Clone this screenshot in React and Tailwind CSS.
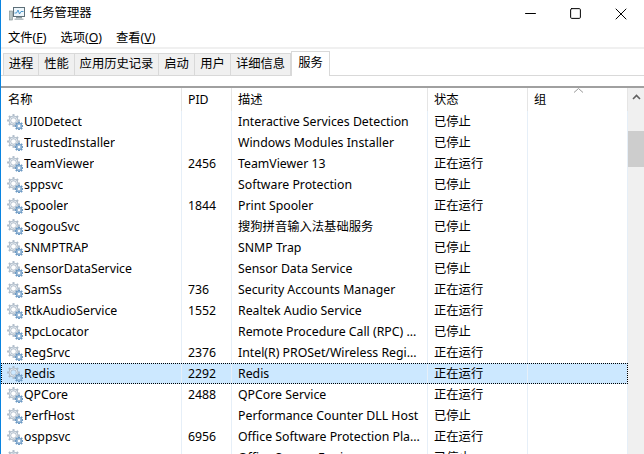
import { Minus, Square, X } from 'lucide-react'

const font = '[font-family:"Noto_Sans","Noto_Sans_CJK_SC",sans-serif]'

const tabs = [
  { label: '进程', w: 'w-[36px]' },
  { label: '性能', w: 'w-[36px]' },
  { label: '应用历史记录', w: 'w-[84px]' },
  { label: '启动', w: 'w-[36px]' },
  { label: '用户', w: 'w-[36px]' },
  { label: '详细信息', w: 'w-[60px]' },
]

const rows = [
  ['UI0Detect', '', 'Interactive Services Detection', '已停止'],
  ['TrustedInstaller', '', 'Windows Modules Installer', '已停止'],
  ['TeamViewer', '2456', 'TeamViewer 13', '正在运行'],
  ['sppsvc', '', 'Software Protection', '已停止'],
  ['Spooler', '1844', 'Print Spooler', '正在运行'],
  ['SogouSvc', '', '搜狗拼音输入法基础服务', '已停止'],
  ['SNMPTRAP', '', 'SNMP Trap', '已停止'],
  ['SensorDataService', '', 'Sensor Data Service', '已停止'],
  ['SamSs', '736', 'Security Accounts Manager', '正在运行'],
  ['RtkAudioService', '1552', 'Realtek Audio Service', '正在运行'],
  ['RpcLocator', '', 'Remote Procedure Call (RPC) ...', '已停止'],
  ['RegSrvc', '2376', 'Intel(R) PROSet/Wireless Regi...', '正在运行'],
  ['Redis', '2292', 'Redis', '正在运行'],
  ['QPCore', '2488', 'QPCore Service', '正在运行'],
  ['PerfHost', '', 'Performance Counter DLL Host', '已停止'],
  ['osppsvc', '6956', 'Office Software Protection Pla...', '正在运行'],
  ['ose', '', 'Office Source Engine', '已停止'],
]

function Cog({ cx, cy, r, fill, stroke }) {
  const teeth = [0, 45, 90, 135, 180, 225, 270, 315]
  return (
    <g>
      {teeth.map((a) => (
        <rect
          key={a}
          x={cx - 1}
          y={cy - r - 1.4}
          width="2"
          height="2.4"
          fill={stroke}
          transform={`rotate(${a} ${cx} ${cy})`}
        />
      ))}
      <circle cx={cx} cy={cy} r={r * 0.72} fill="none" stroke={stroke} strokeWidth={r * 0.5} />
      <circle cx={cx} cy={cy} r={r * 0.72} fill="none" stroke={fill} strokeWidth={r * 0.18} />
    </g>
  )
}

function GearIcon() {
  return (
    <svg width="16" height="16" viewBox="0 0 16 16" className="shrink-0">
      <Cog cx={6.5} cy={6.5} r={5} fill="#e8edf2" stroke="#aebbc9" />
      <Cog cx={12} cy={12} r={3} fill="#cfe0f0" stroke="#6d9ac4" />
    </svg>
  )
}

function AppIcon() {
  return (
    <svg width="16" height="16" viewBox="0 0 16 16" className="shrink-0">
      <rect x="0.5" y="5" width="3" height="9" fill="#b9c4c4" stroke="#7d8c8c" strokeWidth="0.6" />
      <rect x="4.5" y="1.5" width="11" height="9" fill="#eef6fb" stroke="#5d6f78" />
      <path d="M5.5 7 L7.5 7 L9 4 L10.5 8 L12 5.5 L14.5 5.5" fill="none" stroke="#3a8fc8" strokeWidth="0.9" />
      <rect x="7" y="11" width="6" height="1.5" fill="#8b9a9f" />
      <rect x="5.5" y="12.5" width="9" height="1.5" fill="#b4bec2" />
    </svg>
  )
}

function Row({ name, pid, desc, status, selected }) {
  return (
    <div
      className={`relative flex h-[21px] items-center text-[12.3px] text-[#000] ${selected ? 'bg-[#cce8ff] outline-1 outline-dotted outline-offset-[-1px] outline-[#000]' : ''}`}
    >
      <div className="flex w-[181px] items-center gap-[1px] pl-[6px] border-r border-[#e6eff8]">
        <GearIcon />
        <span className="truncate h-[21px] leading-[21px]">{name}</span>
      </div>
      <div className="h-[21px] w-[50px] pl-[6px] leading-[21px] border-r border-[#e6eff8]">{pid}</div>
      <div className="h-[21px] w-[196px] pl-[6px] leading-[21px] whitespace-nowrap overflow-hidden border-r border-[#e6eff8]">{desc}</div>
      <div className="h-[21px] w-[100px] pl-[6px] leading-[21px] border-r border-[#e6eff8]">{status}</div>
      <div className="h-[21px] w-[100px] border-r border-[#e6eff8]"></div>
    </div>
  )
}

export default function App() {
  return (
    <div className={`${font} flex h-[454px] w-[644px] flex-col overflow-hidden border-l border-[#0a84e0] bg-white text-[#000]`}>
      {/* title bar */}
      <div className="flex h-[27px] shrink-0 items-center">
        <div className="ml-[8px] flex items-center gap-[5px]">
          <AppIcon />
          <span className="text-[12.3px]">任务管理器</span>
        </div>
        <div className="ml-auto flex items-center">
          <div className="flex w-[46px] justify-center"><Minus size={17} strokeWidth={1} absoluteStrokeWidth /></div>
          <div className="flex w-[45px] justify-center"><Square size={13} strokeWidth={1} absoluteStrokeWidth /></div>
          <div className="flex w-[46px] justify-center"><X size={20} strokeWidth={1} absoluteStrokeWidth /></div>
        </div>
      </div>

      {/* menu */}
      <div className="flex h-[20px] shrink-0 items-center gap-[14px] pl-[7px] pt-[2px] text-[12.3px]">
        <span>文件(<u>F</u>)</span>
        <span>选项(<u>O</u>)</span>
        <span>查看(<u>V</u>)</span>
      </div>
      <div className="h-[2px] shrink-0 bg-[#f0f0f0]"></div>

      {/* tabs */}
      <div className="flex h-[27px] shrink-0 items-end border-b border-[#d9d9d9] pl-[2px]">
        {tabs.map((t) => (
          <div
            key={t.label}
            className={`${t.w} flex h-[22px] items-center justify-center border border-b-0 border-l-0 first:border-l border-[#d9d9d9] bg-[#f0f0f0] text-[12.3px]`}
          >
            {t.label}
          </div>
        ))}
        <div className="-mb-px flex h-[25px] w-[39px] items-center justify-center border border-b-0 border-l border-[#d9d9d9] bg-white pb-[2px] text-[12.3px]">
          服务
        </div>
      </div>
      <div className="h-[10px] shrink-0"></div>

      {/* table */}
      <div className="flex min-h-0 flex-1 border-t-2 border-[#a0a0a0]">
        <div className="relative w-[627px] shrink-0 overflow-hidden">
          <div className="flex h-[23px] items-center text-[12.3px]">
            <div className="h-[23px] w-[181px] pl-[7px] leading-[23px] border-r border-[#e5e5e5]">名称</div>
            <div className="h-[23px] w-[50px] pl-[6px] leading-[23px] border-r border-[#e5e5e5]">PID</div>
            <div className="h-[23px] w-[196px] pl-[6px] leading-[23px] border-r border-[#e5e5e5]">描述</div>
            <div className="h-[23px] w-[100px] pl-[6px] leading-[23px] border-r border-[#e5e5e5]">状态</div>
            <div className="h-[23px] w-[100px] pl-[6px] leading-[23px] border-r border-[#e5e5e5]">组</div>
          </div>
          <svg width="11" height="5" viewBox="0 0 11 5" className="absolute left-[572px] top-0">
            <path d="M1 4.5 L5.5 0.5 L10 4.5" fill="none" stroke="#9a9a9a" />
          </svg>
          {rows.map((r) => (
            <Row key={r[0]} name={r[0]} pid={r[1]} desc={r[2]} status={r[3]} selected={r[0] === 'Redis'} />
          ))}
        </div>

        {/* scrollbar */}
        <div className="flex w-[16px] shrink-0 flex-col bg-[#f0f0f0]">
          <div className="flex h-[17px] shrink-0 items-center justify-center">
            <svg width="9" height="6" viewBox="0 0 9 6">
              <path d="M1 5 L4.5 1.5 L8 5" fill="none" stroke="#606060" strokeWidth="1.6" />
            </svg>
          </div>
          <div className="mt-[26px] h-[36px] shrink-0 bg-[#cdcdcd]"></div>
        </div>
      </div>
    </div>
  )
}
